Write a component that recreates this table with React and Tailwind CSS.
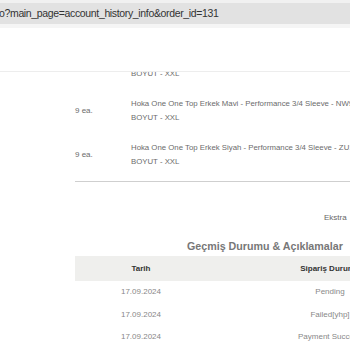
import React from 'react';

const items = [
  { qty: '9 ea.', name: 'Hoka One One Top Erkek Mavi - Performance 3/4 Sleeve - NW9876', attr: 'BOYUT - XXL' },
  { qty: '9 ea.', name: 'Hoka One One Top Erkek Siyah - Performance 3/4 Sleeve - ZU1844', attr: 'BOYUT - XXL' },
];

const history = [
  { date: '17.09.2024', status: 'Pending' },
  { date: '17.09.2024', status: 'Failed[yhp]' },
  { date: '17.09.2024', status: 'Payment Success' },
];

export default function App() {
  return (
    <div className="w-[350px] h-[350px] overflow-hidden bg-white font-['Liberation_Sans',Arial,sans-serif] flex flex-col">
      {/* browser address bar */}
      <div className="h-[3px] bg-[#f1f1f1] shrink-0" />
      <div className="h-[21px] bg-[#e2e2e2] shrink-0 flex items-center overflow-hidden">
        <span className="text-[10.5px] tracking-[-0.35px] text-[#333] whitespace-nowrap ml-[-1px]">o?main_page=account_history_info&amp;order_id=131</span>
      </div>
      <div className="h-[4px] bg-[#f5f5f5] shrink-0" />

      {/* site header (white) */}
      <div className="h-[44px] shrink-0 bg-white border-b border-[#ededed]" />

      <div className="flex-1 overflow-hidden pl-[75px]">
        <div className="mt-[-5px] pl-[56px] text-[7.8px] leading-[14px] text-[#6b6b6b] whitespace-nowrap">BOYUT - XXL</div>

        <div className="mt-[16px] flex flex-col gap-[16px]">
          {items.map((it, i) => (
            <div key={i} className="flex items-center text-[7.8px] leading-[14px] text-[#6b6b6b] whitespace-nowrap">
              <div className="w-[56px] shrink-0 text-[8px]">{it.qty}</div>
              <div>
                <div>{it.name}</div>
                <div>{it.attr}</div>
              </div>
            </div>
          ))}
        </div>

        <div className="mt-[12px] border-t border-[#cfcfcf]" />

        <div className="mt-[30px] pl-[249px] text-[8px] leading-[12px] text-[#666] whitespace-nowrap">Ekstra</div>

        <div className="mt-[15px] pl-[112px] text-[10.7px] leading-[14px] font-bold text-[#777] whitespace-nowrap">
          Geçmiş Durumu &amp; Açıklamalar
        </div>

        <div className="mt-[3px] w-[378px] text-[8px] whitespace-nowrap">
          <div className="grid grid-cols-[132px_246px] h-[25px] items-center bg-[#efefed] font-bold text-[#333]">
            <div className="text-center">Tarih</div>
            <div className="text-center">Sipariş Durumu</div>
          </div>
          {history.map((h, i) => (
            <div key={i} className="grid grid-cols-[132px_246px] h-[22.5px] items-center text-[#888]">
              <div className="text-center">{h.date}</div>
              <div className="text-center">{h.status}</div>
            </div>
          ))}
        </div>
      </div>
    </div>
  );
}
